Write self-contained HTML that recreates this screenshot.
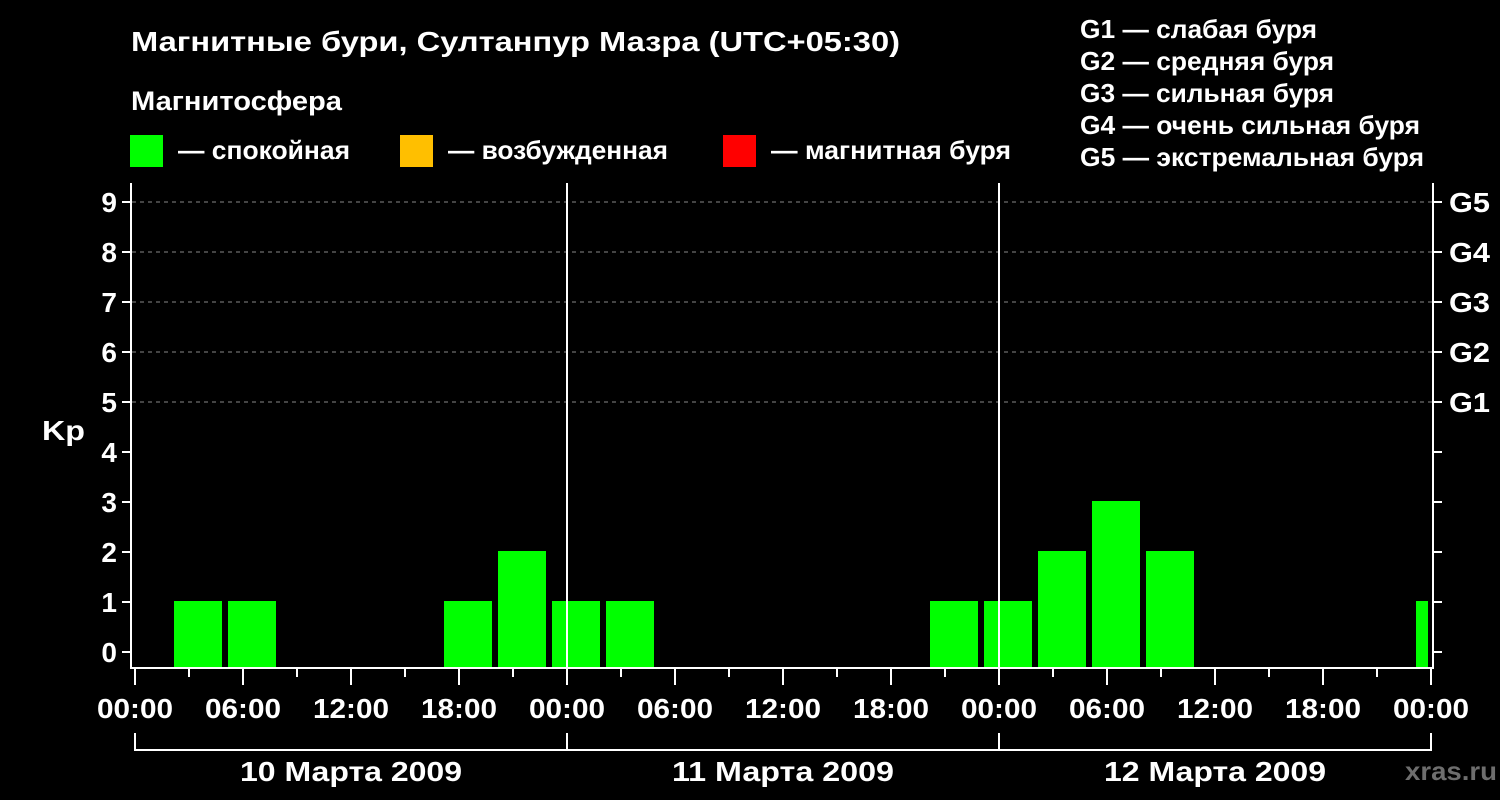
<!DOCTYPE html>
<html><head><meta charset="utf-8"><style>
html,body{margin:0;padding:0;background:#000;width:1500px;height:800px;overflow:hidden}
svg{display:block}
text{font-family:"Liberation Sans",Arial,sans-serif;font-weight:bold;fill:#fff}
</style></head><body>
<svg width="1500" height="800" viewBox="0 0 1500 800">
<rect width="1500" height="800" fill="#000"/>
<text x="131" y="51" font-size="28" textLength="769" lengthAdjust="spacingAndGlyphs">Магнитные бури, Султанпур Мазра (UTC+05:30)</text>
<text x="131" y="110" font-size="27" textLength="211" lengthAdjust="spacingAndGlyphs">Магнитосфера</text>
<rect x="130" y="135" width="33" height="32" fill="#00ff00"/>
<text x="178" y="159" font-size="26" textLength="172" lengthAdjust="spacingAndGlyphs">— спокойная</text>
<rect x="400" y="135" width="33" height="32" fill="#ffbf00"/>
<text x="448" y="159" font-size="26" textLength="220" lengthAdjust="spacingAndGlyphs">— возбужденная</text>
<rect x="723" y="135" width="33" height="32" fill="#ff0000"/>
<text x="771" y="159" font-size="26" textLength="240" lengthAdjust="spacingAndGlyphs">— магнитная буря</text>
<g font-size="26" lengthAdjust="spacingAndGlyphs">
<text x="1080" y="38" textLength="237" lengthAdjust="spacingAndGlyphs">G1 — слабая буря</text>
<text x="1080" y="70" textLength="254" lengthAdjust="spacingAndGlyphs">G2 — средняя буря</text>
<text x="1080" y="102" textLength="254" lengthAdjust="spacingAndGlyphs">G3 — сильная буря</text>
<text x="1080" y="134" textLength="340" lengthAdjust="spacingAndGlyphs">G4 — очень сильная буря</text>
<text x="1080" y="166" textLength="344" lengthAdjust="spacingAndGlyphs">G5 — экстремальная буря</text>
</g>
<g stroke="#888" stroke-width="1" stroke-dasharray="4,4">
<line x1="132" y1="202" x2="1432" y2="202"/>
<line x1="132" y1="252" x2="1432" y2="252"/>
<line x1="132" y1="302" x2="1432" y2="302"/>
<line x1="132" y1="352" x2="1432" y2="352"/>
<line x1="132" y1="402" x2="1432" y2="402"/>
</g>
<g fill="#00ff00">
<rect x="174" y="601" width="48" height="67"/>
<rect x="228" y="601" width="48" height="67"/>
<rect x="444" y="601" width="48" height="67"/>
<rect x="498" y="551" width="48" height="117"/>
<rect x="552" y="601" width="48" height="67"/>
<rect x="606" y="601" width="48" height="67"/>
<rect x="930" y="601" width="48" height="67"/>
<rect x="984" y="601" width="48" height="67"/>
<rect x="1038" y="551" width="48" height="117"/>
<rect x="1092" y="501" width="48" height="167"/>
<rect x="1146" y="551" width="48" height="117"/>
<rect x="1416" y="601" width="12" height="67"/>
</g>
<g stroke="#fff" stroke-width="2" fill="none">
<line x1="131" y1="183" x2="131" y2="669"/>
<line x1="130" y1="668" x2="1434" y2="668"/>
<line x1="1433" y1="183" x2="1433" y2="669"/>
<line x1="567" y1="183" x2="567" y2="668"/>
<line x1="999" y1="183" x2="999" y2="668"/>
</g>
<g stroke="#fff" stroke-width="2">
<line x1="122" y1="202" x2="131" y2="202"/><line x1="122" y1="252" x2="131" y2="252"/>
<line x1="122" y1="302" x2="131" y2="302"/><line x1="122" y1="352" x2="131" y2="352"/>
<line x1="122" y1="402" x2="131" y2="402"/><line x1="122" y1="452" x2="131" y2="452"/>
<line x1="122" y1="502" x2="131" y2="502"/><line x1="122" y1="552" x2="131" y2="552"/>
<line x1="122" y1="602" x2="131" y2="602"/><line x1="122" y1="652" x2="131" y2="652"/>
<line x1="1433" y1="202" x2="1442" y2="202"/><line x1="1433" y1="252" x2="1442" y2="252"/>
<line x1="1433" y1="302" x2="1442" y2="302"/><line x1="1433" y1="352" x2="1442" y2="352"/>
<line x1="1433" y1="402" x2="1442" y2="402"/><line x1="1433" y1="452" x2="1442" y2="452"/>
<line x1="1433" y1="502" x2="1442" y2="502"/><line x1="1433" y1="552" x2="1442" y2="552"/>
<line x1="1433" y1="602" x2="1442" y2="602"/><line x1="1433" y1="652" x2="1442" y2="652"/>
</g>
<g stroke="#fff" stroke-width="2">
<line x1="135" y1="669" x2="135" y2="685"/><line x1="189" y1="669" x2="189" y2="677"/>
<line x1="243" y1="669" x2="243" y2="685"/><line x1="297" y1="669" x2="297" y2="677"/>
<line x1="351" y1="669" x2="351" y2="685"/><line x1="405" y1="669" x2="405" y2="677"/>
<line x1="459" y1="669" x2="459" y2="685"/><line x1="513" y1="669" x2="513" y2="677"/>
<line x1="567" y1="669" x2="567" y2="685"/><line x1="621" y1="669" x2="621" y2="677"/>
<line x1="675" y1="669" x2="675" y2="685"/><line x1="729" y1="669" x2="729" y2="677"/>
<line x1="783" y1="669" x2="783" y2="685"/><line x1="837" y1="669" x2="837" y2="677"/>
<line x1="891" y1="669" x2="891" y2="685"/><line x1="945" y1="669" x2="945" y2="677"/>
<line x1="999" y1="669" x2="999" y2="685"/><line x1="1053" y1="669" x2="1053" y2="677"/>
<line x1="1107" y1="669" x2="1107" y2="685"/><line x1="1161" y1="669" x2="1161" y2="677"/>
<line x1="1215" y1="669" x2="1215" y2="685"/><line x1="1269" y1="669" x2="1269" y2="677"/>
<line x1="1323" y1="669" x2="1323" y2="685"/><line x1="1377" y1="669" x2="1377" y2="677"/>
<line x1="1431" y1="669" x2="1431" y2="685"/>
</g>
<g stroke="#fff" stroke-width="2" fill="none">
<polyline points="135,733 135,750 1431,750 1431,733"/>
<line x1="567" y1="733" x2="567" y2="750"/>
<line x1="999" y1="733" x2="999" y2="750"/>
</g>
<g font-size="28" text-anchor="end">
<text x="117" y="212">9</text><text x="117" y="262">8</text><text x="117" y="312">7</text>
<text x="117" y="362">6</text><text x="117" y="412">5</text><text x="117" y="462">4</text>
<text x="117" y="512">3</text><text x="117" y="562">2</text><text x="117" y="612">1</text>
<text x="117" y="662">0</text>
</g>
<text x="42" y="440" font-size="28" textLength="43" lengthAdjust="spacingAndGlyphs">Kp</text>
<g font-size="28">
<text x="1449" y="212" textLength="41" lengthAdjust="spacingAndGlyphs">G5</text>
<text x="1449" y="262" textLength="41" lengthAdjust="spacingAndGlyphs">G4</text>
<text x="1449" y="312" textLength="41" lengthAdjust="spacingAndGlyphs">G3</text>
<text x="1449" y="362" textLength="41" lengthAdjust="spacingAndGlyphs">G2</text>
<text x="1449" y="412" textLength="41" lengthAdjust="spacingAndGlyphs">G1</text>
</g>
<g font-size="28">
<text x="97" y="718" textLength="76" lengthAdjust="spacingAndGlyphs">00:00</text>
<text x="205" y="718" textLength="76" lengthAdjust="spacingAndGlyphs">06:00</text>
<text x="313" y="718" textLength="76" lengthAdjust="spacingAndGlyphs">12:00</text>
<text x="421" y="718" textLength="76" lengthAdjust="spacingAndGlyphs">18:00</text>
<text x="529" y="718" textLength="76" lengthAdjust="spacingAndGlyphs">00:00</text>
<text x="637" y="718" textLength="76" lengthAdjust="spacingAndGlyphs">06:00</text>
<text x="745" y="718" textLength="76" lengthAdjust="spacingAndGlyphs">12:00</text>
<text x="853" y="718" textLength="76" lengthAdjust="spacingAndGlyphs">18:00</text>
<text x="961" y="718" textLength="76" lengthAdjust="spacingAndGlyphs">00:00</text>
<text x="1069" y="718" textLength="76" lengthAdjust="spacingAndGlyphs">06:00</text>
<text x="1177" y="718" textLength="76" lengthAdjust="spacingAndGlyphs">12:00</text>
<text x="1285" y="718" textLength="76" lengthAdjust="spacingAndGlyphs">18:00</text>
<text x="1393" y="718" textLength="76" lengthAdjust="spacingAndGlyphs">00:00</text>
<text x="240" y="781" textLength="222" lengthAdjust="spacingAndGlyphs">10 Марта 2009</text>
<text x="672" y="781" textLength="222" lengthAdjust="spacingAndGlyphs">11 Марта 2009</text>
<text x="1104" y="781" textLength="222" lengthAdjust="spacingAndGlyphs">12 Марта 2009</text>
</g>
<text x="1405" y="780" font-size="26" textLength="92" lengthAdjust="spacingAndGlyphs" style="fill:#6e6e6e">xras.ru</text>
</svg>
</body></html>
